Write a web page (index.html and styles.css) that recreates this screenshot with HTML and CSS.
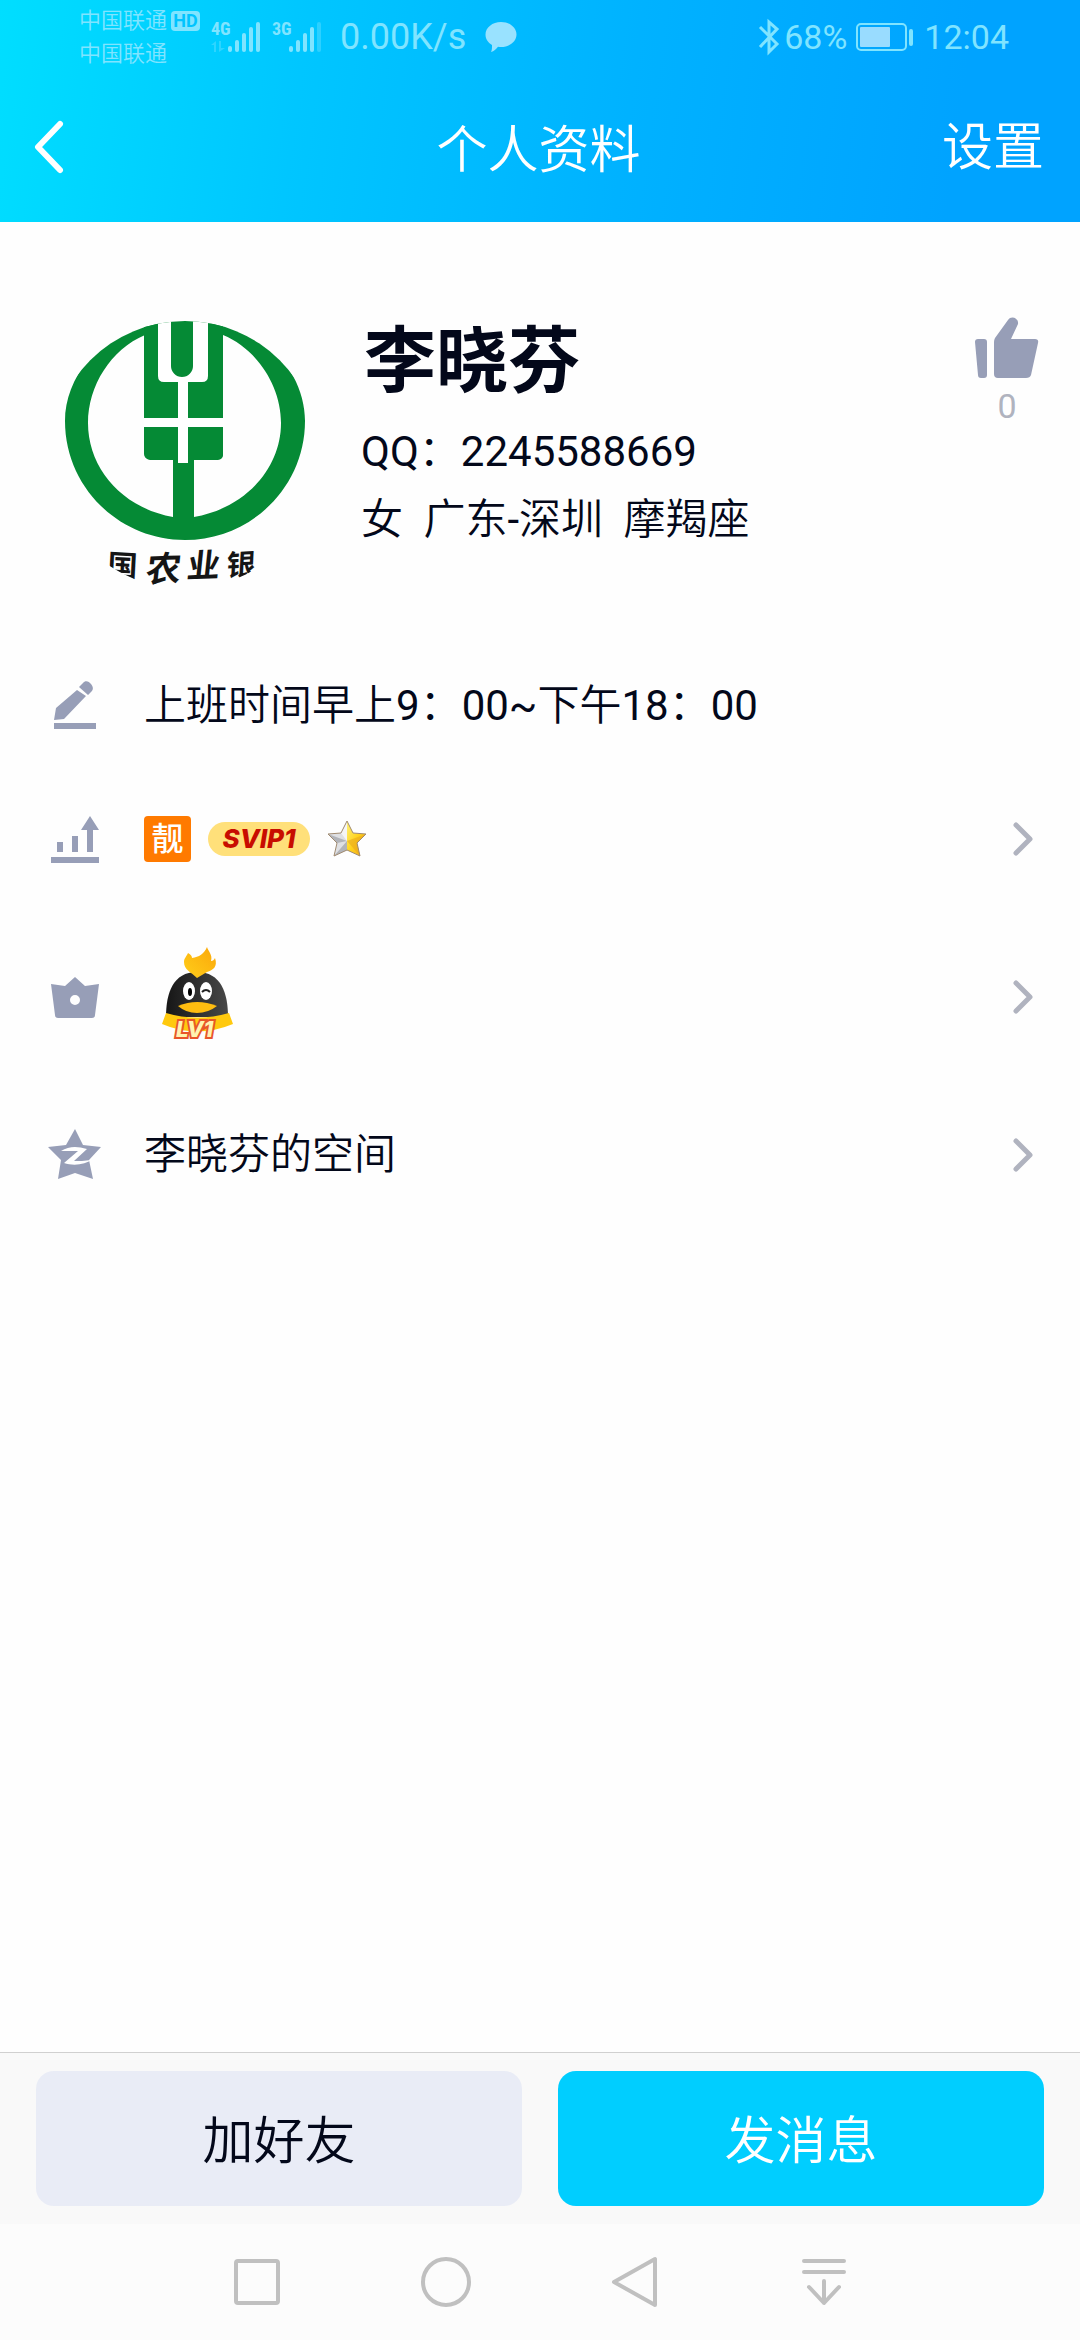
FILE: index.html
```html
<!DOCTYPE html>
<html lang="zh-CN">
<head>
<meta charset="utf-8">
<meta name="viewport" content="width=device-width, initial-scale=1">
<title>个人资料</title>
<link rel="stylesheet" href="styles.css">
</head>
<body>
<header class="header">
  <div class="status">
    <div class="carriers">
      <div class="carrier">中国联通<span class="hd">HD</span></div>
      <div class="carrier">中国联通</div>
    </div>
    <div class="signals">
      <svg width="50" height="32" viewBox="0 0 50 32" fill="currentColor">
        <text class="net" x="0" y="14">4G</text>
        <path opacity=".35" d="M0 24l5-4v11h-2v-7zM8 20h2v7h4l-6 4z"/>
        <rect x="17" y="25" width="4" height="6" rx="2"/><rect x="24" y="19" width="4" height="12" rx="2"/><rect x="31" y="12" width="4" height="19" rx="2"/><rect x="38" y="6" width="4" height="25" rx="2"/><rect x="45" y="1" width="4" height="30" rx="2"/>
      </svg>
      <svg width="50" height="32" viewBox="0 0 50 32" fill="currentColor">
        <text class="net" x="0" y="14">3G</text>
        <rect x="17" y="25" width="4" height="6" rx="2"/><rect x="24" y="19" width="4" height="12" rx="2"/><rect x="31" y="12" width="4" height="19" rx="2"/><rect x="38" y="6" width="4" height="25" rx="2"/><rect x="45" y="1" width="4" height="30" rx="2" opacity=".35"/>
      </svg>
    </div>
    <span class="speed">0.00K/s</span>
    <svg width="32" height="32" viewBox="0 0 32 32" fill="#99e2ff"><path d="M16 1C24.500 1 31.500 6.500 31.500 13.500S24.500 26 16 26c-1 0-2 0-3-.3-2 2.600-4 4.600-7 5.300 1-2 1-4 1-7C3 21.500.5 18 .5 13.500.5 6.500 7.500 1 16 1z"/></svg>
    <div class="power">
      <svg width="20" height="34" viewBox="0 0 20 34" fill="none" stroke="currentColor" stroke-width="3"><path d="M1 7l17 17-8 8V2l8 7L1 27"/></svg>
      <span class="pct">68%</span>
      <svg width="58" height="28" viewBox="0 0 58 28"><rect x="1" y="1" width="49" height="26" rx="4" fill="none" stroke="currentColor" stroke-width="2"/><rect x="4" y="4" width="30" height="20" rx="1" fill="#99dcff"/><rect x="53" y="6" width="4" height="17" rx="2" fill="currentColor"/></svg>
      <span class="clock">12:04</span>
    </div>
  </div>
  <div class="titlebar">
    <button class="back" aria-label="返回"><svg width="32" height="56" viewBox="0 0 32 56" fill="none" stroke="#fff" stroke-width="6" stroke-linecap="round" stroke-linejoin="round"><path d="M27 4L5 27l22 23"/></svg></button>
    <h1 class="title">个人资料</h1>
    <button class="settings">设置</button>
  </div>
</header>

<main class="content">
  <section class="profile">
    <svg class="avatar" width="270" height="270" viewBox="0 0 270 270" role="img" aria-label="头像">
      <defs><clipPath id="round"><circle cx="135" cy="135" r="134"/></clipPath></defs>
      <g clip-path="url(#round)">
        <g fill="#058a35">
          <path fill-rule="evenodd" d="M135 -4C206 -4 255 48 255 101C255 167 201 220 135 220S15 167 15 101C15 48 66 -4 135 -4zM95 15C61 29 38 66 38 103C38 148 72 188 123 197V140H100a5 5 0 0 1-5-5V108H173V135a5 5 0 0 1-5 5H144V197C196 188 231 148 231 103C231 66 207 29 173 15V98H95z"/>
          <path d="M94 4h79v130a5 5 0 0 1-5 5H99a5 5 0 0 1-5-5z"/>
        </g>
        <path fill="#fff" d="M108 0H121V46a11 11 0 0 0 22 0V0H158V56q0 6-6 6H138V98H174V107H138V143H128V107H94V98H128V62H114q-6 0-6-6z"/>
        <g class="brush">
          <text font-size="30" transform="translate(57 256) rotate(3)">国</text>
          <text font-size="35" transform="translate(95 262) rotate(-2) skewX(-8)">农</text>
          <text font-size="33" transform="translate(136 258) rotate(-2) skewX(-8)">业</text>
          <text font-size="29" transform="translate(176 256) rotate(-3) skewX(-6)">银</text>
        </g>
      </g>
    </svg>
    <div class="info">
      <h2 class="name">李晓芬</h2>
      <p class="line"><span class="num">QQ</span>：<span class="num">2245588669</span></p>
      <p class="line">女  广东<span class="num">-</span>深圳  摩羯座</p>
    </div>
    <button class="like" aria-label="赞">
      <svg width="66" height="64" viewBox="0 0 66 64" fill="#979eb7"><path d="M4 23h6q3 0 3 3v33q0 3-3 3H7q-3 0-3-3L1 26q0-3 3-3zM21 22L34 4c3-5 11-2 10 4l-7 15h24q4 0 3 4l-7 32q-1 3-5 3H24q-4 0-4-4V26q0-2 1-4z"/></svg>
      <span class="num">0</span>
    </button>
  </section>

  <div class="row note">
    <svg class="icon" width="54" height="54" viewBox="0 0 54 54" fill="#979eb7"><path d="M6 44h42v6H6zM6 41l2-12L29 11l9 6L16 40zM31 8l4-4c2-3 6-2 8 1s3 5 0 8l-3 3z"/></svg>
    <span class="text">上班时间早上<span class="num">9</span>：<span class="num">00~</span>下午<span class="num">18</span>：<span class="num">00</span></span>
  </div>
  <a class="row" href="#level">
    <svg class="icon" width="54" height="54" viewBox="0 0 54 54" fill="#979eb7"><path d="M3 45h48v6H3zM9 30h6v10H9zM24 24h6v16h-6zM39 40V18h-6l9-14 9 14h-6v22z"/></svg>
    <span class="badges">
      <span class="good">靓</span>
      <span class="svip">SVIP1</span>
      <svg width="40" height="38" viewBox="0 0 40 38"><defs><linearGradient id="gold" x2="1" y2="1"><stop stop-color="#fff27a"/><stop offset=".5" stop-color="#ffd21c"/><stop offset="1" stop-color="#f2a61b"/></linearGradient></defs><path fill="#dfe0e3" d="M20 1L14 13 1 14l9 9-3 13 13-6z"/><path fill="#b2b4b9" d="M20 21L1 14l9 9zM20 21L7 36l13-6z"/><path fill="#f5f5f6" d="M20 1v20L14 13z"/><path fill="url(#gold)" d="M20 1l6 12 13 1-9 9 3 13-13-6z"/><path fill="#e9a91c" d="M20 21l10 2 3 13zM20 21L39 14l-9 9z" opacity=".6"/><path fill="none" stroke="#a08a70" d="M20 1l6 12 13 1-9 9 3 13-13-6L7 36l3-13-9-9 13-1z"/></svg>
    </span>
    <svg class="arrow" width="20" height="34" viewBox="0 0 20 34"><path d="M3 3l14 14L3 31"/></svg>
  </a>
  <a class="row" href="#lv">
    <svg class="icon" width="54" height="54" viewBox="0 0 54 54" fill="#979eb7" fill-rule="evenodd"><path d="M3 14l14 2L27 7l10 9 14-2-4 31q0 3-3 3H10q-3 0-3-3zM27 25a5 5 0 1 0 0 10a5 5 0 0 0 0-10z"/></svg>
    <svg class="penguin" width="74" height="94" viewBox="0 0 74 94">
      <defs><linearGradient id="body" x1="0" x2="1"><stop stop-color="#161616"/><stop offset="1" stop-color="#484848"/></linearGradient><linearGradient id="fire" x1="0" y1="1" x2="1" y2="0"><stop stop-color="#ffce1a"/><stop offset="1" stop-color="#fba70a"/></linearGradient></defs>
      <path fill="url(#body)" d="M5 70C5 46 12 25 36 25S67 46 67 70z"/>
      <path fill="url(#fire)" d="M36 31C30 25 23 23 23 15c0-4 3-6 4-9 3 2 4 3 4 5 7-1 12-4 15-11 1 4 6 8 4 14 2 0 3-1 4-3 3 9-2 12-8 14z"/>
      <path fill="#ffc90e" d="M5 66Q36 75 68 66L72 77Q36 92 1 77z"/>
      <ellipse cx="28" cy="44" rx="6" ry="9" fill="#fff"/><ellipse cx="45" cy="44" rx="6" ry="9" fill="#fff"/><ellipse cx="29" cy="45" rx="2" ry="4"/><path d="M41 45q4-4 8 0" fill="none" stroke="#222" stroke-width="2"/>
      <path fill="#ffbd10" d="M17 59q19-8 39 0-9 7-20 7t-19-7z"/>
      <text class="lv" x="15" y="90">LV1</text>
    </svg>
    <svg class="arrow" width="20" height="34" viewBox="0 0 20 34"><path d="M3 3l14 14L3 31"/></svg>
  </a>
  <a class="row" href="#qzone">
    <svg class="icon" width="54" height="54" viewBox="0 0 54 54"><path fill="#979eb7" d="M27 1l8 16 18 2-12 13 4 19-18-6-17 6 3-19L0 19l18-2z"/><path fill="#fff" d="M13 23c8-5 16-5 26-2L26 33c8 0 13 0 19-2-8 6-20 7-29 4l14-12c-6 0-11 0-17 0z"/></svg>
    <span class="text">李晓芬的空间</span>
    <svg class="arrow" width="20" height="34" viewBox="0 0 20 34"><path d="M3 3l14 14L3 31"/></svg>
  </a>
</main>

<footer class="actions">
  <button class="btn">加好友</button>
  <button class="btn primary">发消息</button>
</footer>
<nav class="nav">
  <button aria-label="最近任务"><svg width="52" height="52" viewBox="0 0 52 52"><rect x="5" y="5" width="42" height="42" rx="2"/></svg></button>
  <button aria-label="主屏幕"><svg width="52" height="52" viewBox="0 0 52 52"><circle cx="26" cy="26" r="23"/></svg></button>
  <button aria-label="返回上一页"><svg width="52" height="52" viewBox="0 0 52 52"><path d="M46 3v46L5 26z"/></svg></button>
  <button aria-label="下拉通知"><svg width="52" height="52" viewBox="0 0 52 52"><path d="M6 5h40M6 16h40M26 25v22M11 31l15 16 15-16"/></svg></button>
</nav>
</body>
</html>
```
FILE: styles.css
```css
* { box-sizing: border-box; }
body {
  margin: 0;
  min-height: 100vh;
  display: flex;
  flex-direction: column;
  background: #fefefe;
  color: #03081a;
  font-family: Roboto, "Noto Sans CJK SC", sans-serif;
  font-size: 42px;
  font-weight: 350;
}
button {
  border: 0;
  padding: 0;
  background: none;
  color: inherit;
  font: inherit;
}
svg { display: block; flex: none; overflow: visible; }
h1, h2, p { margin: 0; }

.header {
  background: linear-gradient(98deg, #00deff 0%, #00c6ff 28%, #00b2ff 58%, #00a3ff 88%, #00a3ff 100%);
}
.status {
  display: flex;
  align-items: center;
  height: 74px;
  padding: 0 71px 0 79px;
  color: #80e4ff;
}
.carriers { width: 132px; }
.carrier {
  display: flex;
  align-items: center;
  gap: 4px;
  font-size: 22px;
  line-height: 33px;
}
.hd {
  width: 29px;
  border-radius: 4px;
  background: #80e4ff;
  color: #00c4ff;
  font-size: 18px;
  font-weight: 700;
  line-height: 20px;
  text-align: center;
}
.signals { display: flex; gap: 11px; }
.net {
  font-family: "Roboto Condensed", "Liberation Sans Narrow", Roboto, sans-serif;
  font-size: 18px;
  font-weight: 700;
}
.speed {
  margin: 0 19px 0 18px;
  font-size: 36px;
  font-weight: 400;
}
.power {
  display: flex;
  align-items: center;
  margin-left: auto;
  font-size: 34px;
  font-weight: 400;
}
.pct { margin: 0 9px 0 5px; }
.clock { margin-left: 10px; }

.titlebar {
  display: grid;
  grid-template-columns: 1fr auto 1fr;
  align-items: center;
  height: 148px;
  padding: 0 36px 0 33px;
  color: #fff;
  font-size: 51px;
  line-height: 72px;
}
.title {
  padding-top: 6px;
  font-size: 51px;
  font-weight: 350;
}
.back { justify-self: start; }
.settings { justify-self: end; }

.content { flex: 1; }
.profile {
  display: flex;
  padding: 98px 40px 62px 50px;
}
.info {
  flex: 1;
  padding: 2px 0 0 41px;
}
.name {
  padding: 0 0 16px 3px;
  font-size: 72px;
  font-weight: 700;
  line-height: 80px;
}
.line {
  line-height: 68px;
  white-space: pre;
}
.num { font-weight: 400; }
.like {
  display: flex;
  flex-direction: column;
  align-items: center;
  align-self: flex-start;
  gap: 6px;
  margin-top: -4px;
  color: #b0b3bf;
  font-size: 34px;
  line-height: 40px;
}
.brush {
  font-weight: 700;
  fill: #151515;
}

.row {
  display: flex;
  align-items: center;
  min-height: 158px;
  padding: 0 47px 0 48px;
  color: inherit;
  text-decoration: none;
}
.note { min-height: 108px; }
.icon { margin-right: 42px; }
.text { line-height: 60px; }
.arrow {
  margin-left: auto;
  fill: none;
  stroke: #b0b3bf;
  stroke-width: 5px;
  stroke-linecap: round;
  stroke-linejoin: round;
}
.badges {
  display: flex;
  align-items: center;
  gap: 17px;
}
.good {
  width: 47px;
  border-radius: 4px;
  background: #ff7a00;
  color: #fff;
  font-size: 32px;
  font-weight: 500;
  line-height: 46px;
  text-align: center;
}
.svip {
  width: 102px;
  border-radius: 17px;
  background: #ffe07a;
  color: #c80d00;
  font-family: Inter, sans-serif;
  font-size: 26px;
  font-style: italic;
  font-weight: 800;
  line-height: 34px;
  text-align: center;
}
.penguin { margin: 0 0 6px 17px; }
.lv {
  font-family: Inter, sans-serif;
  font-size: 22px;
  font-style: italic;
  font-weight: 800;
  fill: #fff3b0;
  stroke: #e8562a;
  stroke-width: 4px;
  paint-order: stroke;
}

.actions {
  display: grid;
  grid-template-columns: 1fr 1fr;
  gap: 36px;
  padding: 18px 36px;
  border-top: 1px solid #d0d0d0;
  background: #f9f9f9;
}
.btn {
  height: 135px;
  padding-bottom: 4px;
  border-radius: 18px;
  background: #e9ecf6;
  font-size: 51px;
}
.primary { background: #00ceff; color: #fff; }
.nav {
  display: grid;
  grid-template-columns: repeat(4, 1fr);
  justify-items: center;
  align-items: center;
  height: 116px;
  padding: 0 15%;
  background: #fcfcfc;
}
.nav svg {
  fill: none;
  stroke: #c0c0c0;
  stroke-width: 4px;
  stroke-linejoin: round;
  stroke-linecap: round;
}
```
